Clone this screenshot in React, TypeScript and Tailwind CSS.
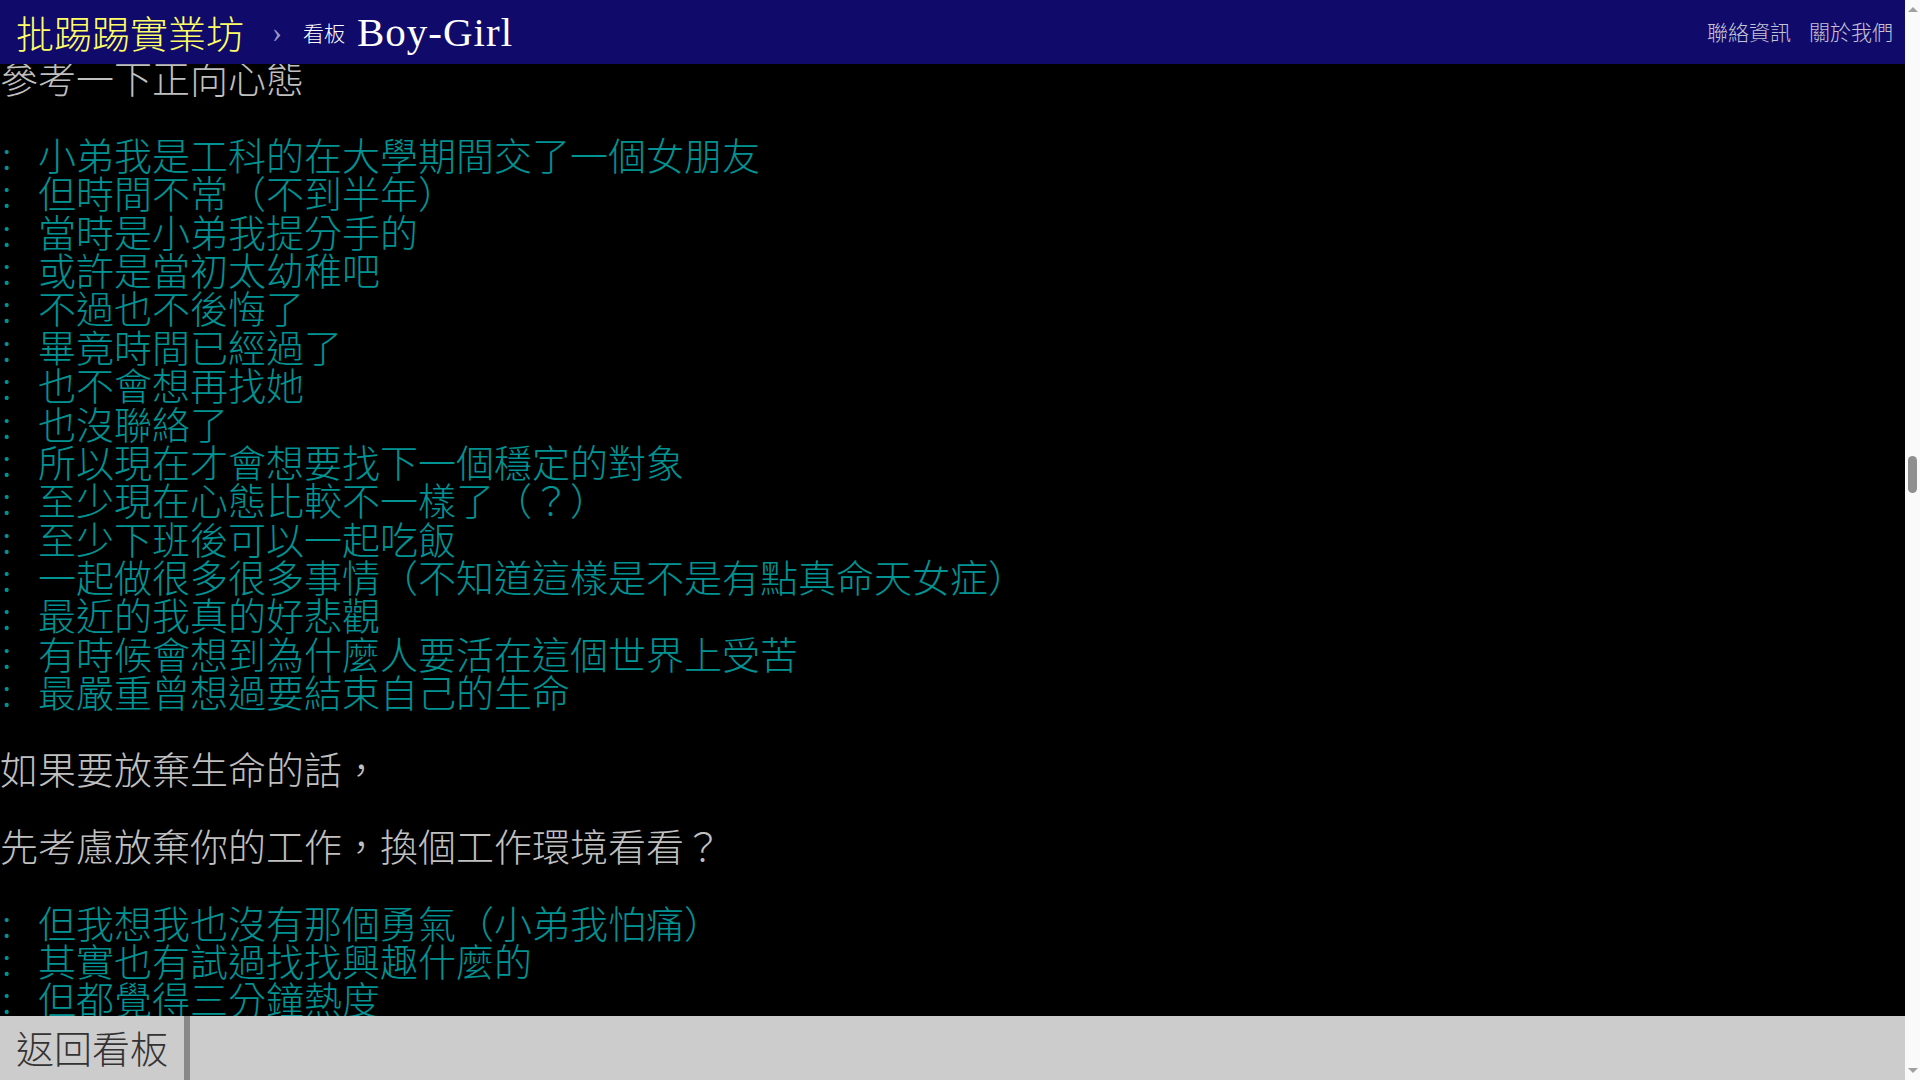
import React from 'react';

type Line = { text: string; quote?: boolean };

const lines: Line[] = [
  { text: '參考一下正向心態' },
  { text: '' },
  { text: '小弟我是工科的在大學期間交了一個女朋友', quote: true },
  { text: '但時間不常（不到半年）', quote: true },
  { text: '當時是小弟我提分手的', quote: true },
  { text: '或許是當初太幼稚吧', quote: true },
  { text: '不過也不後悔了', quote: true },
  { text: '畢竟時間已經過了', quote: true },
  { text: '也不會想再找她', quote: true },
  { text: '也沒聯絡了', quote: true },
  { text: '所以現在才會想要找下一個穩定的對象', quote: true },
  { text: '至少現在心態比較不一樣了（？）', quote: true },
  { text: '至少下班後可以一起吃飯', quote: true },
  { text: '一起做很多很多事情（不知道這樣是不是有點真命天女症）', quote: true },
  { text: '最近的我真的好悲觀', quote: true },
  { text: '有時候會想到為什麼人要活在這個世界上受苦', quote: true },
  { text: '最嚴重曾想過要結束自己的生命', quote: true },
  { text: '' },
  { text: '如果要放棄生命的話，' },
  { text: '' },
  { text: '先考慮放棄你的工作，換個工作環境看看？' },
  { text: '' },
  { text: '但我想我也沒有那個勇氣（小弟我怕痛）', quote: true },
  { text: '其實也有試過找找興趣什麼的', quote: true },
  { text: '但都覺得三分鐘熱度', quote: true },
];

const cjk = "font-['Noto_Sans_CJK_TC','Noto_Sans_CJK_SC',sans-serif]";

const ArticleLine: React.FC<{ line: Line }> = ({ line }) => {
  if (!line.text) return <div className="h-[38.4px]" />;
  if (line.quote) {
    return (
      <div className="h-[38.4px] whitespace-pre text-[#009393]">
        <span className="inline-block w-[38px] pl-[2px]">:</span>
        {line.text}
      </div>
    );
  }
  return <div className="h-[38.4px] whitespace-pre text-[#c0c0c0]">{line.text}</div>;
};

const App: React.FC = () => {
  return (
    <div className={`flex h-screen w-full overflow-hidden bg-[#fafafa] ${cjk}`}>
      <div className="flex min-w-0 flex-1 flex-col bg-black">
        {/* Top bar */}
        <header className="relative z-10 flex h-16 shrink-0 items-center justify-between bg-[#100b6b] pl-4 pr-[12px]">
          <div className="flex items-center">
            <span className="text-[38px] font-light leading-none text-[#ffff66]">批踢踢實業坊</span>
            <span className="ml-[28px] font-['Liberation_Serif',serif] text-[30px] leading-none text-[#9a9ac0]">›</span>
            <span className="ml-[21px] text-[21px] font-light leading-none text-white">看板</span>
            <span className="ml-[12px] font-['Liberation_Serif',serif] text-[41px] leading-none tracking-[1px] text-white">
              Boy-Girl
            </span>
          </div>
          <nav className="flex items-center gap-[18px] text-[21px] font-light text-[#c4c4d4]">
            <span>聯絡資訊</span>
            <span>關於我們</span>
          </nav>
        </header>

        {/* Article body */}
        <main className="flex-1 overflow-hidden">
          <div className="-mt-[6px] text-[38px] font-light leading-[38.4px]">
            {lines.map((line, i) => (
              <ArticleLine key={i} line={line} />
            ))}
          </div>
        </main>

        {/* Bottom navigation */}
        <footer className="flex h-16 shrink-0 bg-[#cccccc]">
          <div className="flex items-center border-r-[6px] border-[#888888] px-4 pb-[3px] text-[38px] font-light leading-none text-[#333333]">
            返回看板
          </div>
        </footer>
      </div>

      {/* Scrollbar */}
      <div className="relative w-[15px] shrink-0 bg-[#fafafa]">
        <div className="absolute left-[3px] top-[7px] h-0 w-0 border-x-[5px] border-b-[5px] border-x-transparent border-b-[#a0a0a0]" />
        <div className="absolute left-[3px] top-[456px] h-[37px] w-[9px] rounded-full bg-[#909090]" />
        <div className="absolute bottom-[7px] left-[3px] h-0 w-0 border-x-[5px] border-t-[5px] border-x-transparent border-t-[#a0a0a0]" />
      </div>
    </div>
  );
};

export default App;
